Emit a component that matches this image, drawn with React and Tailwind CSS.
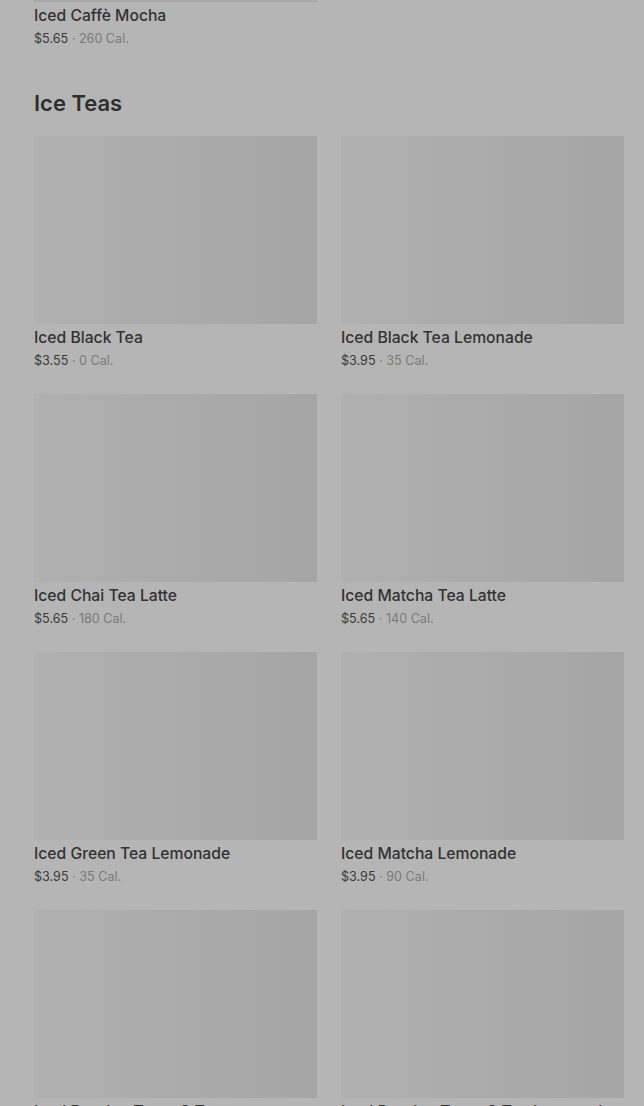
import React from 'react'

const items = [
  { name: 'Iced Black Tea', price: '$3.55', cal: '0 Cal.' },
  { name: 'Iced Black Tea Lemonade', price: '$3.95', cal: '35 Cal.' },
  { name: 'Iced Chai Tea Latte', price: '$5.65', cal: '180 Cal.' },
  { name: 'Iced Matcha Tea Latte', price: '$5.65', cal: '140 Cal.' },
  { name: 'Iced Green Tea Lemonade', price: '$3.95', cal: '35 Cal.' },
  { name: 'Iced Matcha Lemonade', price: '$3.95', cal: '90 Cal.' },
  { name: 'Iced Passion Tango® Tea', price: '$3.55', cal: '0 Cal.' },
  { name: 'Iced Passion Tango® Tea Lemonade', price: '$3.95', cal: '50 Cal.' },
]

const ItemText = ({ name, price, cal }) => (
  <>
    <div className="mt-[4px] text-[15.7px] leading-[20px] font-medium text-[#323232] truncate">{name}</div>
    <div className="mt-[3px] text-[12.6px] leading-[19px] text-[#3a3a3a]">
      {price} <span className="text-[#7a7a7a]">· {cal}</span>
    </div>
  </>
)

const MenuItem = (props) => (
  <div className="flex flex-col min-w-0">
    <div className="h-[188px] bg-gradient-to-r from-[#b0b0b0] to-[#a5a5a5]"></div>
    <ItemText {...props} />
  </div>
)

export default function App() {
  return (
    <div
      className="h-[1106px] overflow-hidden bg-[#b5b5b5] pl-[34px] pr-[20px]"
      style={{ fontFamily: 'Inter, "Liberation Sans", sans-serif' }}
    >
      {/* tail of the previous section */}
      <div className="grid grid-cols-2 gap-x-[24px]">
        <div className="flex flex-col min-w-0">
          <div className="h-[2px] bg-[#a8a8a8]"></div>
          <ItemText name="Iced Caffè Mocha" price="$5.65" cal="260 Cal." />
        </div>
      </div>

      <h2 className="mt-[41px] text-[22px] leading-[28px] font-semibold text-[#2e2e2e]">Ice Teas</h2>

      <div className="mt-[19px] grid grid-cols-2 gap-x-[24px] gap-y-[24px]">
        {items.map((item, index) => (
          <MenuItem key={index} {...item} />
        ))}
      </div>
    </div>
  )
}
